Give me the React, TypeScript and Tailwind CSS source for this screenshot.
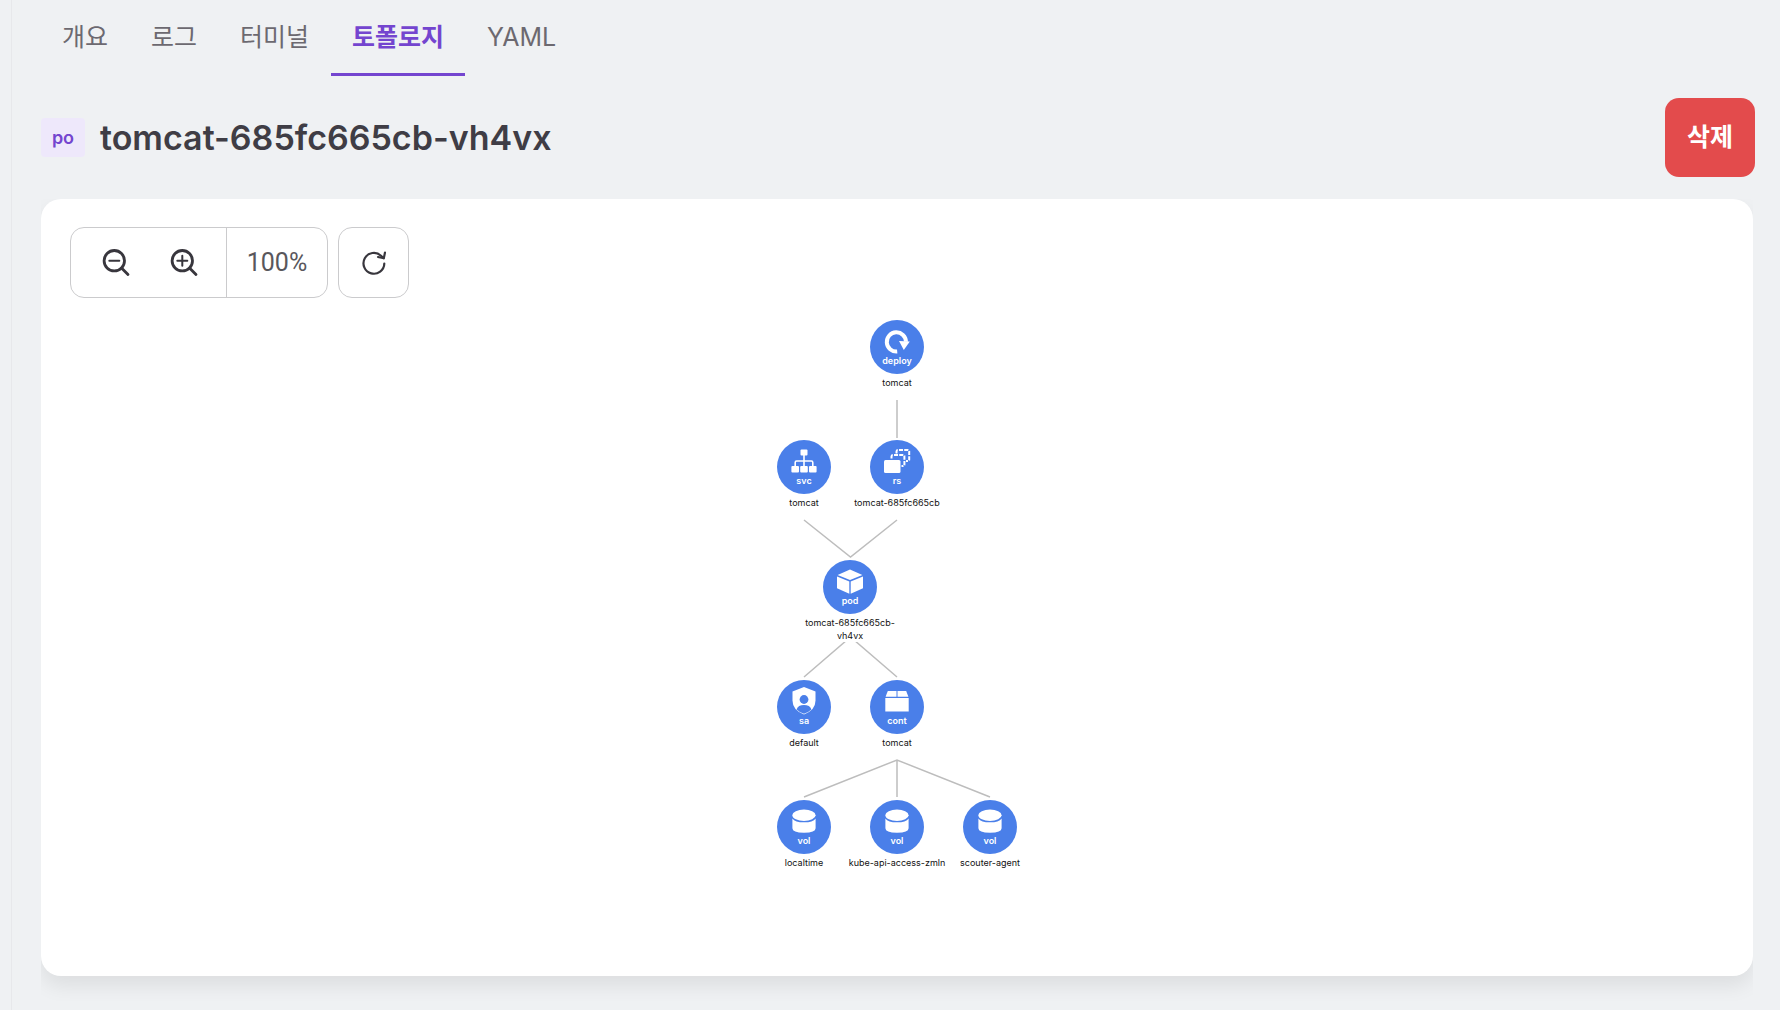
import React from 'react';
import { clsx } from 'clsx';

type Kind = 'deploy' | 'svc' | 'rs' | 'pod' | 'sa' | 'cont' | 'vol';

interface TopologyNode {
  id: string;
  kind: Kind;
  name: string;
  place: string;
}

const tabs = ['개요', '로그', '터미널', '토폴로지', 'YAML'];

const nodes: TopologyNode[] = [
  { id: 'deploy', kind: 'deploy', name: 'tomcat', place: 'left-[200px] top-0' },
  { id: 'svc', kind: 'svc', name: 'tomcat', place: 'left-[107px] top-[120px]' },
  { id: 'rs', kind: 'rs', name: 'tomcat-685fc665cb', place: 'left-[200px] top-[120px]' },
  { id: 'pod', kind: 'pod', name: 'tomcat-685fc665cb-vh4vx', place: 'left-[153px] top-[240px]' },
  { id: 'sa', kind: 'sa', name: 'default', place: 'left-[107px] top-[360px]' },
  { id: 'cont', kind: 'cont', name: 'tomcat', place: 'left-[200px] top-[360px]' },
  { id: 'vol-1', kind: 'vol', name: 'localtime', place: 'left-[107px] top-[480px]' },
  { id: 'vol-2', kind: 'vol', name: 'kube-api-access-zmln', place: 'left-[200px] top-[480px]' },
  { id: 'vol-3', kind: 'vol', name: 'scouter-agent', place: 'left-[293px] top-[480px]' },
];

const glyphs: Record<Kind, React.ReactNode> = {
  deploy: (
    <>
      <path d="M14.2 23.5a9.6 9.6 0 1 1 8.8-9.8" fill="none" stroke="white" strokeWidth="4" />
      <path d="M16 13 26.800 13.600 20.800 22Z" fill="white" />
    </>
  ),
  svc: (
    <>
      <g fill="white">
        <rect x="10.5" y="1.5" width="7" height="6" rx="1" />
        <rect x="1.4" y="18" width="7.6" height="6.6" rx="1" />
        <rect x="10.2" y="18" width="7.6" height="6.6" rx="1" />
        <rect x="19" y="18" width="7.6" height="6.6" rx="1" />
      </g>
      <path d="M14 7v11M5.2 18v-3.6q0-1.4 1.4-1.4h14.8q1.4 0 1.4 1.4V18" fill="none" stroke="white" strokeWidth="1.6" />
    </>
  ),
  rs: (
    <>
      <rect x="1" y="12" width="16.5" height="13" rx="1.5" fill="white" />
      <path d="M8.500 10.500V8.400Q8.500 7 9.900 7H20Q21.400 7 21.400 8.400V16.600Q21.400 18 20 18H18.500" fill="none" stroke="white" strokeWidth="2" strokeDasharray="4 1.200" />
      <path d="M13.500 5.500V3.400Q13.500 2 14.900 2H24.800Q26.200 2 26.200 3.400V11.600Q26.200 13 24.800 13H23" fill="none" stroke="white" strokeWidth="2" strokeDasharray="4 1.200" />
    </>
  ),
  pod: (
    <g fill="white">
      <path d="M14 1.500 26.400 7 14 12 1.600 7Z" />
      <path d="M1 8.600 13.300 13.600V25.700L1 20.200Z" />
      <path d="M27 8.600 14.700 13.600V25.700L27 20.200Z" />
    </g>
  ),
  sa: (
    <>
      <path d="M14-1 25.500 3.500V12.500Q25.500 22 14 26.500 2.500 22 2.500 12.500V3.500Z" fill="white" />
      <circle cx="14" cy="11.500" r="4.400" fill="#4a7fe9" />
      <path d="M6.600 21.400Q8 17 14 17T21.400 21.400Q18.500 24.300 14 25.800 9.500 24.300 6.600 21.400Z" fill="#4a7fe9" />
    </>
  ),
  cont: (
    <g fill="white">
      <path d="M4.800 3H13.500V8.800H2.600Z" />
      <path d="M14.500 3H23.200L25.400 8.800H14.500Z" />
      <path d="M2.300 10H25.700V23.500H2.300Z" />
    </g>
  ),
  vol: (
    <g fill="white">
      <ellipse cx="14" cy="7.200" rx="11.600" ry="5.700" />
      <path d="M2.400 10.400Q5 14.300 14 14.300T25.600 10.400V20.300Q25.600 24.700 14 24.700T2.400 20.300Z" />
    </g>
  ),
};

function Node({ kind, name, place }: TopologyNode) {
  return (
    <div className={clsx('absolute flex w-[100px] -translate-x-1/2 flex-col items-center', place)}>
      <div className="flex size-[54px] flex-col items-center rounded-full bg-[#4a7fe9] pt-2">
        <svg className="size-7 shrink-0 overflow-visible" viewBox="0 0 28 28" aria-hidden="true">
          {glyphs[kind]}
        </svg>
        <span className="text-[9px] leading-[10px] font-semibold text-white">{kind}</span>
      </div>
      <span className="mt-0.5 bg-white text-center text-[9px] leading-[13px] text-[#111]">{name}</span>
    </div>
  );
}

function Magnifier({ plus = false }: { plus?: boolean }) {
  return (
    <svg className="size-7" viewBox="0 0 28 28" fill="none" stroke="#38363d" strokeLinecap="round" aria-hidden="true">
      <circle cx="12.300" cy="11.700" r="10.200" strokeWidth="2.800" />
      <path d="M19.500 19 26 25.600" strokeWidth="2.800" />
      <path d={plus ? 'M7.300 11.700h10M12.300 6.700v10' : 'M7.300 11.700h10'} strokeWidth="2" />
    </svg>
  );
}

export default function App() {
  return (
    <div className="flex min-h-screen bg-[#eff1f3] pl-[11px] font-['Inter','Noto_Sans_CJK_KR',sans-serif]">
      <main className="flex min-w-0 flex-1 flex-col border-l border-[#e7e8eb] pr-[27px] pl-[29px]">
        <nav className="flex h-[76px] gap-px">
          {tabs.map((tab) => (
            <a
              key={tab}
              href="#"
              className={clsx(
                'flex items-center border-b-3 px-[21px] pt-0.5 text-[25px]',
                tab === '토폴로지' ? 'border-[#7445cf] font-bold text-[#7445cf]' : 'border-transparent text-[#6c6970]',
              )}
            >
              {tab}
            </a>
          ))}
        </nav>

        <header className="mt-[22px] flex h-[79px] items-center">
          <span className="flex h-[39px] w-11 items-center justify-center rounded bg-[#eee8fb] text-lg font-semibold text-[#7445cf]">
            po
          </span>
          <h1 className="ml-[15px] text-[34px] font-semibold text-[#3f3d45]">tomcat-685fc665cb-vh4vx</h1>
          <button type="button" className="-mr-0.5 ml-auto h-full rounded-[14px] bg-[#e34b4c] px-[22px] text-[25px] font-bold text-white">
            삭제
          </button>
        </header>

        <div className="mt-[22px] mb-[9px] flex flex-1 flex-col overflow-hidden pb-[25px]">
          <section className="flex-1 rounded-[20px] bg-white px-[29px] pt-7 pb-16 shadow-[0_10px_20px_rgba(0,0,0,0.08)]">
            <div className="flex gap-2.5">
              <div className="flex h-[71px] overflow-hidden rounded-[14px] border border-[#cbcbcd]">
                <div className="flex items-center gap-10 pr-7 pl-[31px]">
                  <button type="button" aria-label="Zoom out">
                    <Magnifier />
                  </button>
                  <button type="button" aria-label="Zoom in">
                    <Magnifier plus />
                  </button>
                </div>
                <output className="flex w-[101px] items-center justify-center border-l border-[#cbcbcd] font-['Roboto',sans-serif] text-[25px] text-[#59575c]">
                  100%
                </output>
              </div>
              <button type="button" aria-label="Refresh" className="flex size-[71px] items-center justify-center rounded-[14px] border border-[#cbcbcd]">
                <svg className="size-6" viewBox="0 0 24 24" fill="none" stroke="#38363d" strokeWidth="2.200" strokeLinecap="round" strokeLinejoin="round" aria-hidden="true">
                  <path d="M22.300 12.500A10.400 10.400 0 1 1 19 4.700L21.500 7" />
                  <path d="M23 1.500 21.800 7.300 16 6" />
                </svg>
              </button>
            </div>

            <div className="relative mx-auto mt-[22px] h-[560px] w-[400px]">
              <svg className="absolute inset-0 size-full" viewBox="0 0 400 560" fill="none" stroke="#bdbdbd" strokeWidth="1.500" aria-hidden="true">
                <path d="M200 80V118M107 200 153.500 237 200 200M107 357 153.500 317 200 357M107 477 200 440 293 477M200 440V477" />
              </svg>
              {nodes.map((node) => (
                <Node {...node} key={node.id} />
              ))}
            </div>
          </section>
        </div>
      </main>
    </div>
  );
}
